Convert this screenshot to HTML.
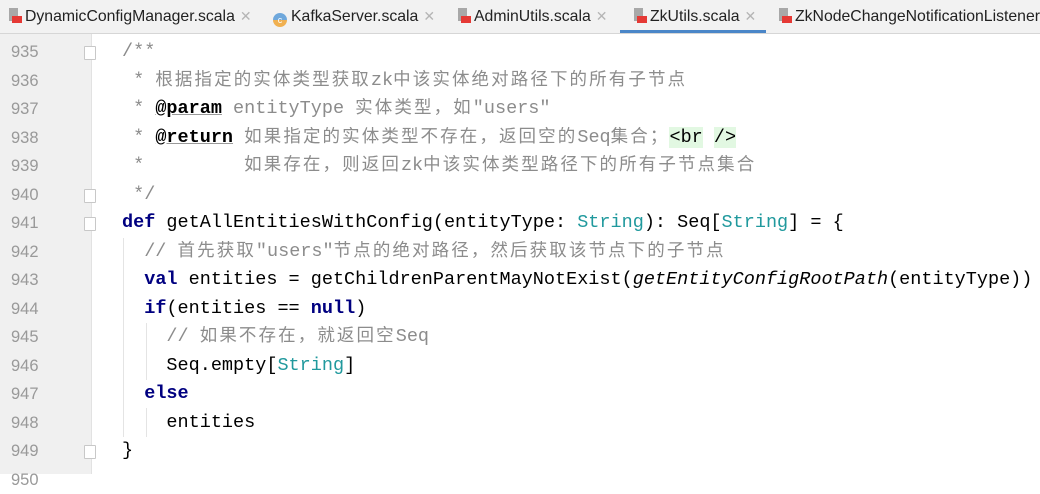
<!DOCTYPE html>
<html><head><meta charset="utf-8"><style>
body{margin:0;width:1040px;height:474px;overflow:hidden;background:#fff;position:relative;font-family:"Liberation Mono","Noto Sans CJK SC",monospace}
.tabs{position:absolute;left:0;top:0;width:1040px;height:33px;background:#f2f2f2;border-bottom:1px solid #d6d6d6;font-family:"Liberation Sans",sans-serif;font-size:15.8px;color:#222}
.tab{position:absolute;top:0;height:33px;line-height:33px;white-space:nowrap}
.tab .x{color:#b5b5b5;font-size:14px;margin-left:5px}
.ic{display:inline-block;width:14px;height:15px;vertical-align:-2px;margin-right:3px;position:relative}
.ic:before{content:"";position:absolute;left:1px;top:0;width:9px;height:13px;background:#a8a8a8}
.ic:after{content:"";position:absolute;left:4px;top:8px;width:10px;height:7px;background:#e53935}
.cc{display:inline-block;width:14px;height:14px;border-radius:50%;background:linear-gradient(#6fa8dc 50%,#f0b050 50%);vertical-align:-2px;margin-right:4px;font-size:9px;line-height:14px;text-align:center;color:#fff}
.active{position:absolute;left:620px;top:30px;width:146px;height:3px;background:#4a86c8}
.gutter{position:absolute;left:0;top:34px;width:91px;height:440px;background:#f0f0f0;border-right:1px solid #e2e2e2}
.ln{position:absolute;left:11px;font-family:"Liberation Sans",sans-serif;font-size:16.5px;color:#999;height:28.5px;line-height:28.5px}
.l{position:absolute;left:122px;height:28.5px;line-height:28.5px;font-size:18.5px;white-space:pre;color:#000}
.c{color:#8c8c8c}
.z{letter-spacing:2.1px;font-family:"Noto Sans CJK SC",sans-serif;font-size:17.5px;line-height:1;vertical-align:0}
.k{color:#000080;font-weight:bold}
.t{color:#20999d}
.tag{color:#000;background:#e2f8e2}
.d{font-weight:bold;color:#000;text-decoration:underline;text-decoration-color:#999}
.g{position:absolute;width:1px;background:#e4e4e4}
.f{position:absolute;left:84px;width:10px;height:12px;border:1px solid #c8c8c8;background:#fff;border-radius:1px}
</style></head><body>
<div class="tabs">
<div class="tab" style="left:8px"><span class="ic"></span>DynamicConfigManager.scala<span class="x">✕</span></div>
<div class="tab" style="left:273px"><span class="cc">c</span>KafkaServer.scala<span class="x">✕</span></div>
<div class="tab" style="left:457px"><span class="ic"></span>AdminUtils.scala<span class="x">✕</span></div>
<div class="tab" style="left:633px"><span class="ic"></span>ZkUtils.scala<span class="x">✕</span></div>
<div class="tab" style="left:778px"><span class="ic"></span>ZkNodeChangeNotificationListener.scala</div>
<div class="active"></div>
</div>
<div class="gutter"></div>
<div class="ln" style="top:38px">935</div>
<div class="ln" style="top:66.5px">936</div>
<div class="ln" style="top:95px">937</div>
<div class="ln" style="top:123.5px">938</div>
<div class="ln" style="top:152px">939</div>
<div class="ln" style="top:180.5px">940</div>
<div class="ln" style="top:209px">941</div>
<div class="ln" style="top:237.5px">942</div>
<div class="ln" style="top:266px">943</div>
<div class="ln" style="top:294.5px">944</div>
<div class="ln" style="top:323px">945</div>
<div class="ln" style="top:351.5px">946</div>
<div class="ln" style="top:380px">947</div>
<div class="ln" style="top:408.5px">948</div>
<div class="ln" style="top:437px">949</div>
<div class="ln" style="top:465.5px">950</div>
<div class="f" style="top:46px"></div>
<div class="f" style="top:189px"></div>
<div class="f" style="top:217px"></div>
<div class="f" style="top:445px"></div>
<div class="g" style="left:123px;top:238px;height:199px"></div>
<div class="g" style="left:146px;top:323px;height:57px"></div>
<div class="g" style="left:146px;top:408px;height:29px"></div>
<div class="l c" style="top:38px">/**</div>
<div class="l c" style="top:66.5px"> * <span class="z">根据指定的实体类型获取</span>zk<span class="z">中该实体绝对路径下的所有子节点</span></div>
<div class="l c" style="top:95px"> * <span class="d">@param</span> entityType <span class="z">实体类型，如</span>"users"</div>
<div class="l c" style="top:123.5px"> * <span class="d">@return</span> <span class="z">如果指定的实体类型不存在，返回空的</span>Seq<span class="z">集合；</span><span class="tag">&lt;br</span> <span class="tag">/&gt;</span></div>
<div class="l c" style="top:152px"> *         <span class="z">如果存在，则返回</span>zk<span class="z">中该实体类型路径下的所有子节点集合</span></div>
<div class="l c" style="top:180.5px"> */</div>
<div class="l" style="top:209px"><span class="k">def</span> getAllEntitiesWithConfig(entityType: <span class="t">String</span>): Seq[<span class="t">String</span>] = {</div>
<div class="l c" style="top:237.5px">  // <span class="z">首先获取</span>"users"<span class="z">节点的绝对路径，然后获取该节点下的子节点</span></div>
<div class="l" style="top:266px">  <span class="k">val</span> entities = getChildrenParentMayNotExist(<i>getEntityConfigRootPath</i>(entityType))</div>
<div class="l" style="top:294.5px">  <span class="k">if</span>(entities == <span class="k">null</span>)</div>
<div class="l c" style="top:323px">    // <span class="z">如果不存在，就返回空</span>Seq</div>
<div class="l" style="top:351.5px">    Seq.empty[<span class="t">String</span>]</div>
<div class="l" style="top:380px">  <span class="k">else</span></div>
<div class="l" style="top:408.5px">    entities</div>
<div class="l" style="top:437px">}</div>
</body></html>
